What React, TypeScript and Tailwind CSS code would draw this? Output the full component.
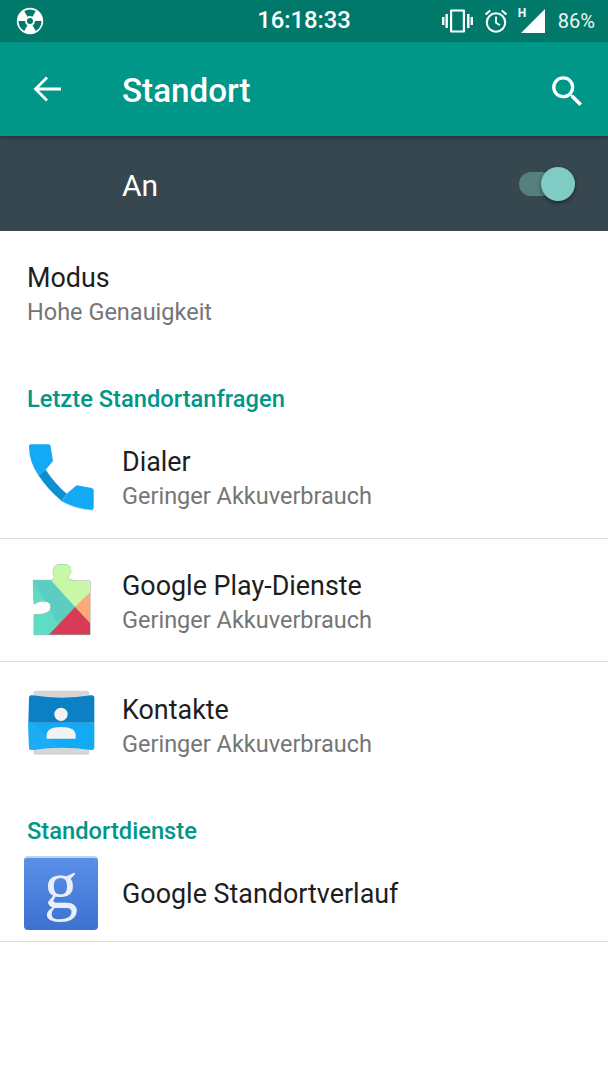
const font = { fontFamily: 'Roboto, sans-serif' };

function RadiationIcon() {
    const blade = 'M9.25 5.04 A11.5 11.5 0 0 1 20.75 5.04 L17.5 10.67 A5 5 0 0 0 12.5 10.67 Z';
    return (
        <svg width="30" height="30" viewBox="0 0 30 30">
            <circle cx="15" cy="15" r="13.2" fill="#fff" />
            <path d={blade} fill="#00796b" />
            <path d={blade} fill="#00796b" transform="rotate(120 15 15)" />
            <path d={blade} fill="#00796b" transform="rotate(240 15 15)" />
            <circle cx="15" cy="15" r="3" fill="#00796b" />
        </svg>
    );
}

function VibrateIcon() {
    return (
        <svg width="31" height="24" viewBox="0 0 31 24" fill="#fff">
            <path d="M9 .5h13a1 1 0 0 1 1 1v21a1 1 0 0 1-1 1H9a1 1 0 0 1-1-1v-21a1 1 0 0 1 1-1zm1.200 2v19h10.600v-19z" fillRule="evenodd" />
            <rect x="3.500" y="5" width="2.400" height="14" />
            <rect x="0" y="8" width="2.400" height="8" />
            <rect x="25.100" y="5" width="2.400" height="14" />
            <rect x="28.600" y="8" width="2.400" height="8" />
        </svg>
    );
}

function AlarmIcon() {
    return (
        <svg width="24" height="24" viewBox="0 0 24 24" fill="none" stroke="#fff">
            <circle cx="12" cy="13.500" r="9.200" strokeWidth="2.100" />
            <path d="M12 7.500v6.300l4 2.400" strokeWidth="1.800" />
            <path d="M1.500 5.500 6.200 1.500M22.500 5.500 17.800 1.500" strokeWidth="2.200" />
        </svg>
    );
}

function BackIcon() {
    return (
        <svg width="28" height="26" viewBox="0 0 28 26" fill="none" stroke="#fff" strokeWidth="2.800">
            <path d="M28 13H3M14 1.500 2.500 13 14 24.500" />
        </svg>
    );
}

function SearchIcon() {
    return (
        <svg width="41" height="41" viewBox="0 0 24 24" fill="#fff" className="mr-[20px] mt-[5px]">
            <path d="M15.5 14h-.79l-.28-.27A6.470 6.470 0 0 0 16 9.500 6.500 6.500 0 1 0 9.500 16c1.610 0 3.090-.59 4.230-1.570l.27.28v.79l5 4.990L20.490 19l-4.990-5zm-6 0C7.010 14 5 11.990 5 9.500S7.010 5 9.500 5 14 7.010 14 9.500 11.990 14 9.500 14z" />
        </svg>
    );
}

// the three app icons are drawn in 3x coordinates, 100px box
function PhoneIcon() {
    return (
        <svg width="100" height="100" viewBox="0 -4 300 300">
            <path d="M140 214 Q180 238 236 241 V236 Q180 233 140 210 Z" fill="#b9dff2" />
            <path d="M42 48 Q42 42 48 42 H100 Q106 42 107 48 L114 92 L92 118 L70 135 Q42 95 42 48 Z" fill="#12a9f5" />
            <path d="M70 135 L92 118 Q120 160 155 190 L140 212 Q100 180 70 135 Z" fill="#0e8fd1" />
            <path d="M140 212 L155 190 L185 165 L230 173 Q236 175 236 180 V232 Q236 238 230 238 Q180 235 140 212 Z" fill="#12a9f5" />
        </svg>
    );
}

function PlayServicesIcon() {
    const outline = 'M55 85 H105 Q118 85 118 74 Q110 62 118 45 Q125 37 142 37 Q160 37 166 45 Q172 62 160 74 Q160 85 180 87 H225 V248 H57 V188 Q72 189 85 186 Q108 180 108 165 Q108 148 85 147 Q70 146 57 156 Z';
    return (
        <svg width="100" height="100" viewBox="0 0 300 300">
            <defs>
                <clipPath id="puzzle"><path d={outline} /></clipPath>
            </defs>
            <path d={outline} fill="none" stroke="#a8a8a8" strokeWidth="3" />
            <g clipPath="url(#puzzle)">
                <rect width="300" height="300" fill="#5fdcc4" />
                <path d="M50 80 H108 L180 165 L130 215 Z" fill="#5ccdc2" />
                <path d="M108 30 H225 V122 L180 165 L108 85 Z" fill="#c8f7a6" />
                <path d="M225 122 V213 L180 165 Z" fill="#fda878" />
                <path d="M100 250 L180 165 L225 213 V250 Z" fill="#d93a55" />
            </g>
        </svg>
    );
}

function ContactsIcon() {
    return (
        <svg width="100" height="100" viewBox="0 0 300 300">
            <rect x="55" y="44" width="168" height="192" rx="6" fill="#d6d6d6" />
            <path d="M42 66 Q42 56 52 58 Q140 72 228 58 Q238 56 238 66 V140 H40 Z" fill="#0b80c5" />
            <path d="M40 140 H238 V214 Q238 224 228 222 Q140 208 52 222 Q42 224 42 214 Z" fill="#12a9f5" />
            <path d="M52 140 L135 214 Q90 214 52 222 Q42 224 42 214 L40 140 Z" fill="#1cadf6" />
            <circle cx="138" cy="115" r="20" fill="#f3f3f3" />
            <path d="M95 188 V178 Q95 153 138 153 Q182 153 182 178 V188 Z" fill="#f3f3f3" />
        </svg>
    );
}

function GoogleIcon() {
    return (
        <div className="w-[74px] h-[74px] rounded-[4px] bg-gradient-to-b from-[#5a8fe8] to-[#3c71d0] border-t-2 border-[#b8d8e8] flex items-center justify-center">
            <span className="text-[#e9eff9] text-[68px] leading-[60px] -mt-[18px]" style={{ fontFamily: '"Liberation Serif", serif' }}>g</span>
        </div>
    );
}

function AppRow({ icon, title, divider = true }: { icon: React.ReactNode; title: string; divider?: boolean }) {
    return (
        <div className={`h-[123.500px] pt-[5px] flex items-center ${divider ? 'border-b border-[#dcdcdc]' : ''}`}>
            <div className="w-[122px] pl-[15px] flex items-center shrink-0">{icon}</div>
            <div className="flex flex-col">
                <span className="text-[26.900px] leading-[35px] pt-[2px] text-[#1e1e1e]">{title}</span>
                <span className="text-[23.500px] leading-[35px] -mt-[1px] text-[#757575]">Geringer Akkuverbrauch</span>
            </div>
        </div>
    );
}

export default function App() {
    return (
        <div className="w-[608px] h-[1080px] bg-white flex flex-col overflow-hidden" style={font}>
            {/* Statusleiste */}
            <div className="h-[42px] bg-[#00796b] flex items-center justify-between pl-[15px] pr-[13px] text-white relative">
                <RadiationIcon />
                <span className="absolute left-0 right-0 text-center text-[23.800px] font-medium">16:18:33</span>
                <div className="flex items-center">
                    <VibrateIcon />
                    <div className="ml-[11px]"><AlarmIcon /></div>
                    <div className="ml-[10px] relative w-[27px] h-[26px]">
                        <span className="absolute left-0 -top-[1px] text-[12px] font-bold leading-none">H</span>
                        <svg className="absolute right-0 top-[1px]" width="24" height="24" viewBox="0 0 24 24" fill="#fff"><path d="M24 0V24H0Z" /></svg>
                    </div>
                    <span className="ml-[13px] text-[20px] text-[#f4f4f4]">86%</span>
                </div>
            </div>

            {/* Toolbar */}
            <div className="h-[94px] bg-[#009688] flex items-center text-white relative z-10 shadow-[0_2px_4px_rgba(0,0,0,0.3)]">
                <div className="w-[122px] pl-[33px]"><BackIcon /></div>
                <h1 className="text-[33.200px] font-medium flex-1 mt-[3px]">Standort</h1>
                <SearchIcon />
            </div>

            {/* Schalter */}
            <div className="h-[95px] bg-[#37474f] flex items-center justify-between text-white">
                <span className="pl-[122px] text-[30px] mt-[3px]">An</span>
                <div className="relative w-[56px] h-[24px] mr-[33px] rounded-full bg-[#55807c]">
                    <div className="absolute right-0 -top-[5px] w-[34px] h-[34px] rounded-full bg-[#80cbc4] shadow-[0_2px_4px_rgba(0,0,0,0.45)]" />
                </div>
            </div>

            <div className="pl-[27px] pt-[28px]">
                <div className="text-[26.900px] leading-[35px] pt-[2px] text-[#1e1e1e]">Modus</div>
                <div className="text-[23.500px] leading-[35px] -mt-[1px] text-[#757575]">Hohe Genauigkeit</div>
            </div>

            <div className="pl-[27px] mt-[54px] text-[23.700px] leading-[30px] font-medium text-[#009688]">Letzte Standortanfragen</div>

            <div className="mt-[1px]">
                <AppRow icon={<PhoneIcon />} title="Dialer" />
                <AppRow icon={<PlayServicesIcon />} title="Google Play-Dienste" />
                <AppRow icon={<ContactsIcon />} title="Kontakte" divider={false} />
            </div>

            <div className="pl-[27px] mt-[30px] text-[23.700px] leading-[30px] font-medium text-[#009688]">Standortdienste</div>

            <div className="h-[96px] flex items-center border-b border-[#dcdcdc]">
                <div className="w-[122px] pl-[24px] shrink-0"><GoogleIcon /></div>
                <span className="text-[26.900px] pt-[3px] text-[#1e1e1e]">Google Standortverlauf</span>
            </div>
        </div>
    );
}
